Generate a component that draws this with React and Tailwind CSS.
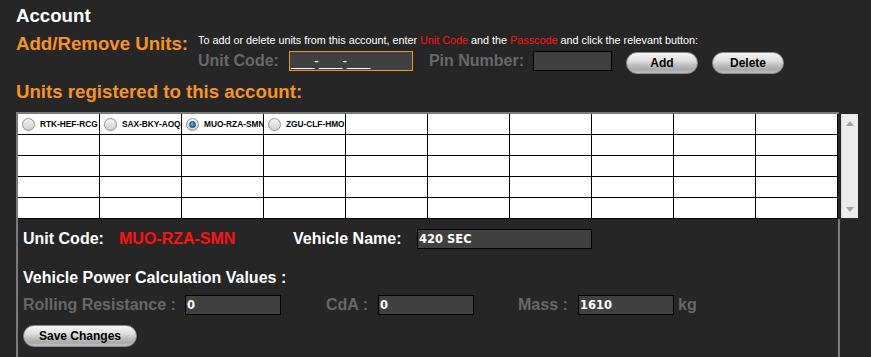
export default function App() {
  const codes = ["RTK-HEF-RCG", "SAX-BKY-AOQ", "MUO-RZA-SMN", "ZGU-CLF-HMO"];
  const btn =
    "h-[22px] rounded-full border border-[#8c8c8c] bg-[linear-gradient(to_bottom,#f6f6f6_0%,#dedede_40%,#bdbdbd_62%,#a9a9a9_85%,#c2c2c2_100%)] text-black font-bold text-[12px] leading-[20px] text-center shrink-0";
  const label = "text-[16px] leading-[20px] font-bold text-[#686868] shrink-0";
  const inputCls =
    "h-[20px] border border-black bg-[#404040] text-white font-bold text-[11.5px] leading-[18px] pl-[1px] font-['DejaVu_Sans',sans-serif] shrink-0";
  const cells = [];
  for (let r = 0; r < 5; r++) {
    for (let c = 0; c < 10; c++) {
      const code = r === 0 ? codes[c] : null;
      cells.push(
        <div
          key={r + "-" + c}
          className="h-[21px] border-r border-b border-black bg-white flex items-center pl-[4px]"
        >
          {code && (
            <>
              <span className="w-[13px] h-[13px] rounded-full border border-[#8e8e8e] bg-[linear-gradient(to_bottom,#f4f4f4,#cfcfcf)] flex items-center justify-center shrink-0">
                {c === 2 && (
                  <span className="w-[7px] h-[7px] rounded-full bg-[radial-gradient(circle_at_40%_35%,#5fb0ea,#0d5a96)] border border-[#0b3d66]" />
                )}
              </span>
              <span className="ml-[5px] text-[8.3px] font-bold text-black whitespace-nowrap">
                {code}
              </span>
            </>
          )}
        </div>
      );
    }
  }
  return (
    <div className="w-[871px] h-[357px] bg-[#262626] overflow-hidden font-['Liberation_Sans',Arial,sans-serif] pl-4 pt-[5px]">
      <div className="text-[18.67px] leading-[22px] font-bold text-white">Account</div>
      <div className="flex mt-[6px]">
        <div className="w-[182px] shrink-0 text-[18.67px] leading-[22px] font-bold text-[#f7941e]">
          Add/Remove Units:
        </div>
        <div className="flex flex-col pt-[1px]">
          <div className="text-[10.8px] leading-[13px] text-white whitespace-nowrap">
            To add or delete units from this account, enter{" "}
            <span className="text-[#ff1010]">Unit Code</span> and the{" "}
            <span className="text-[#ff1010]">Passcode</span> and click the relevant button:
          </div>
          <div className="flex items-start mt-[4px]">
            <span className={label}>Unit Code:</span>
            <div className="ml-[10px] w-[124px] h-[20px] border border-[#f7941e] bg-[#404040] text-white text-[14px] leading-[19px] pl-[1px] whitespace-nowrap shrink-0">
              ___-___-___
            </div>
            <span className={label + " ml-[16px]"}>Pin Number:</span>
            <div className="ml-[9px] w-[79px] h-[20px] border border-black bg-[#404040] shrink-0" />
            <div className={btn + " ml-[14px] mt-[1px] w-[72px]"}>Add</div>
            <div className={btn + " ml-[14px] mt-[1px] w-[72px]"}>Delete</div>
          </div>
        </div>
      </div>
      <div className="mt-[7px] text-[18.67px] leading-[22px] font-bold text-[#f7941e]">
        Units registered to this account:
      </div>
      <div className="mt-[9px] flex items-start">
        <div className="w-[823px] border-l-2 border-t-2 border-[#7a7a7a]">
          <div className="grid grid-cols-[repeat(10,82px)]">{cells}</div>
        </div>
        <div className="ml-[2px] mt-[2px] w-[17px] h-[104px] bg-[#ececec] border-l border-[#dadada] flex flex-col items-center justify-between pt-[7px] pb-[6px]">
          <svg width="8" height="5" viewBox="0 0 8 5">
            <path d="M0 5 L4 0 L8 5 Z" fill="#a3a3a3" />
          </svg>
          <svg width="8" height="5" viewBox="0 0 8 5">
            <path d="M0 0 L8 0 L4 5 Z" fill="#a3a3a3" />
          </svg>
        </div>
      </div>
      <div className="w-[824px] h-[200px] border-l-2 border-r-2 border-[#7a7a7a] pl-[5px] pt-[10px]">
        <div className="flex items-center h-[20px]">
          <span className="w-[96px] text-[16px] leading-[20px] font-bold text-white shrink-0">
            Unit Code:
          </span>
          <span className="w-[174px] text-[16px] leading-[20px] font-bold text-[#ff1010] shrink-0">
            MUO-RZA-SMN
          </span>
          <span className="w-[124px] text-[16px] leading-[20px] font-bold text-white shrink-0">
            Vehicle Name:
          </span>
          <div className={inputCls + " w-[175px]"}>420 SEC</div>
        </div>
        <div className="mt-[19px] text-[16px] leading-[20px] font-bold text-white">
          Vehicle Power Calculation Values :
        </div>
        <div className="mt-[7px] flex items-center h-[20px]">
          <span className={label + " w-[162px]"}>Rolling Resistance :</span>
          <div className={inputCls + " w-[96px]"}>0</div>
          <span className={label + " ml-[45px] w-[52px]"}>CdA :</span>
          <div className={inputCls + " w-[96px]"}>0</div>
          <span className={label + " ml-[44px] w-[60px]"}>Mass :</span>
          <div className={inputCls + " w-[96px]"}>1610</div>
          <span className={label + " ml-[4px]"}>kg</span>
        </div>
        <div className={btn + " mt-[10px] w-[114px]"}>Save Changes</div>
      </div>
    </div>
  );
}
